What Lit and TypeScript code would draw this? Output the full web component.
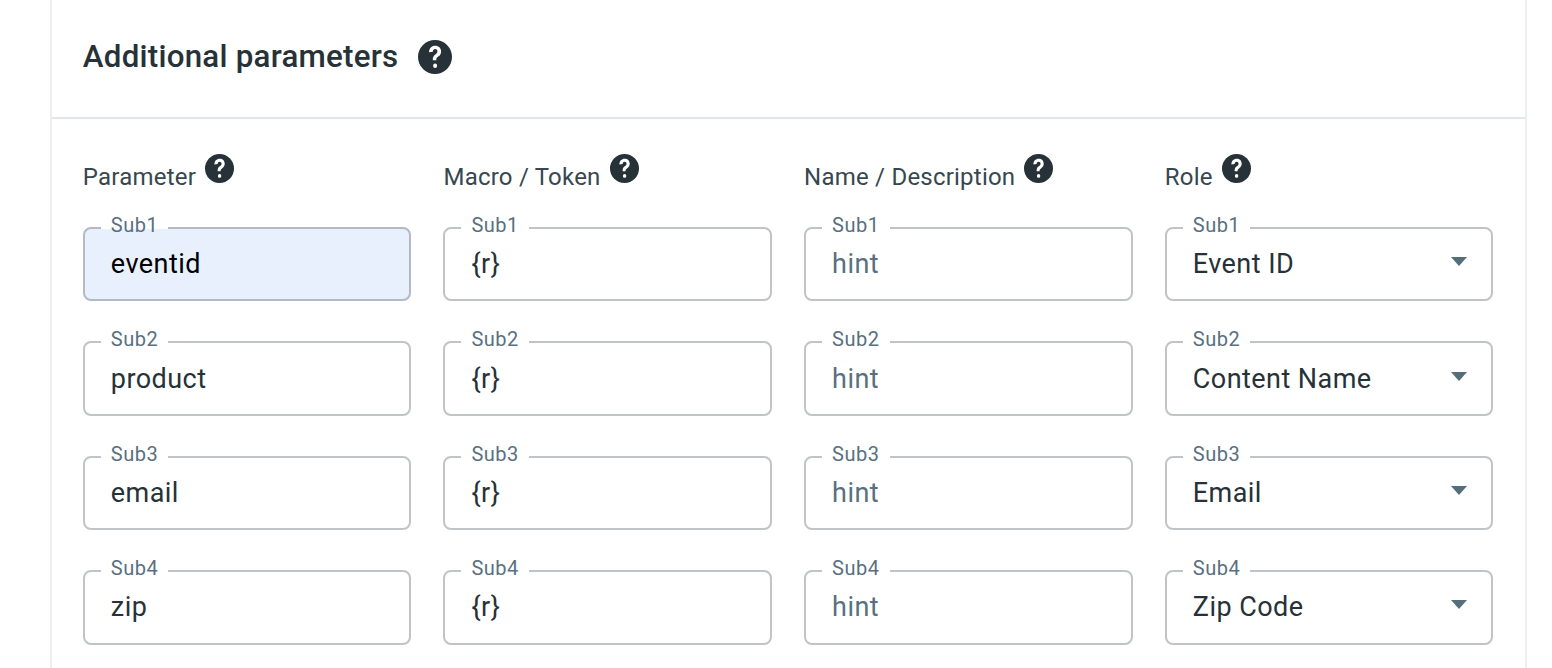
import { LitElement, html, css, svg } from "lit";
import { customElement } from "lit/decorators.js";

const help = (size: string) => html`<svg class=${size} viewBox="0 0 30 30" aria-hidden="true">
  <circle cx="15" cy="15" r="15" fill="#263238"></circle>
  ${svg`<g transform="translate(15 15) scale(1.02 1.14) translate(-15 -15)">
    <path d="M9.8 11.4c.1-3.2 2.2-5.2 5.4-5.2 3 0 5.1 1.8 5.1 4.5 0 1.8-.9 3-2.5 4-1.3.8-1.7 1.4-1.7 2.6v.3h-3v-.6c0-1.9.6-3 2.2-4 1.2-.8 1.8-1.4 1.8-2.3 0-1.1-.8-1.8-1.9-1.8-1.2 0-2 .8-2.1 2z" fill="#fff"></path>
    <circle cx="15.1" cy="21.7" r="1.75" fill="#fff"></circle>
  </g>`}
</svg>`;

const params = ["eventid", "product", "email", "zip"];
const roles = ["Event ID", "Content Name", "Email", "Zip Code"];

@customElement("app-root")
export class AppRoot extends LitElement {
  static styles = css`
    :host { display: block; height: 668px; overflow: hidden; background: #fff; font-family: Roboto, "Liberation Sans", sans-serif; color: #263238; }
    .card { margin: 0 25px 0 50px; border: 2px solid #eceff1; border-top: 0; border-bottom: 0; height: 668px; box-sizing: border-box; }
    .head { height: 119px; box-sizing: border-box; padding: 0 30.8px 4px; display: flex; align-items: center; gap: 20px; border-bottom: 2px solid #e3e6e8; }
    h2 { margin: 0; font-size: 31.3px; line-height: 36px; font-weight: 500; letter-spacing: 0.25px; color: #263238; }
    svg.big { width: 34px; height: 34px; }
    svg.small { width: 29px; height: 29px; }
    .grid { display: grid; grid-template-columns: repeat(4, 328.4px); column-gap: 32.27px; padding: 34.5px 0 0 30.8px; }
    .title { display: flex; align-items: flex-start; height: 73.5px; font-size: 24px; gap: 9px; }
    .title span { line-height: 28px; margin-top: 9.5px; letter-spacing: 0.22px; color: #37474f; }
    .fields { display: flex; flex-direction: column; row-gap: 40px; }
    .field { position: relative; height: 74.4px; box-sizing: border-box; padding: 0 26px; border: 2px solid #c1c4c6; border-radius: 8px; display: flex; align-items: center; }
    .label { position: absolute; left: 16px; top: -16px; padding: 0 10px; font-size: 20px; line-height: 24px; color: #587080; letter-spacing: 0.5px; background: linear-gradient(to bottom, #fff 16px, transparent 16px); }
    .val { flex: 1; font-size: 27px; line-height: 36px; letter-spacing: 0.45px; color: #263238; white-space: nowrap; }
    .hint { color: #587080; }
    .filled { background: #e8f0fe; border-color: #b4bac5; }
    .filled .val { color: #000; }
    .arrow { width: 0; height: 0; border-left: 8.5px solid transparent; border-right: 8.5px solid transparent; border-top: 9px solid #546e7a; margin-top: -5px; margin-right: -1.5px; }
  `;

  private field(i: number, value: string, opts: { hint?: boolean; filled?: boolean; select?: boolean } = {}) {
    return html`<div class="field ${opts.filled ? "filled" : ""}">
      <div class="label">Sub${i + 1}</div>
      <div class="val ${opts.hint ? "hint" : ""}">${value}</div>
      ${opts.select ? html`<div class="arrow"></div>` : ""}
    </div>`;
  }

  private column(title: string, body: unknown) {
    return html`<div>
      <div class="title"><span>${title}</span>${help("small")}</div>
      <div class="fields">${body}</div>
    </div>`;
  }

  render() {
    return html`<div class="card">
      <div class="head"><h2>Additional parameters</h2>${help("big")}</div>
      <div class="grid">
        ${this.column("Parameter", params.map((p, i) => this.field(i, p, { filled: i === 0 })))}
        ${this.column("Macro / Token", params.map((_, i) => this.field(i, "{r}")))}
        ${this.column("Name / Description", params.map((_, i) => this.field(i, "hint", { hint: true })))}
        ${this.column("Role", roles.map((r, i) => this.field(i, r, { select: true })))}
      </div>
    </div>`;
  }
}
